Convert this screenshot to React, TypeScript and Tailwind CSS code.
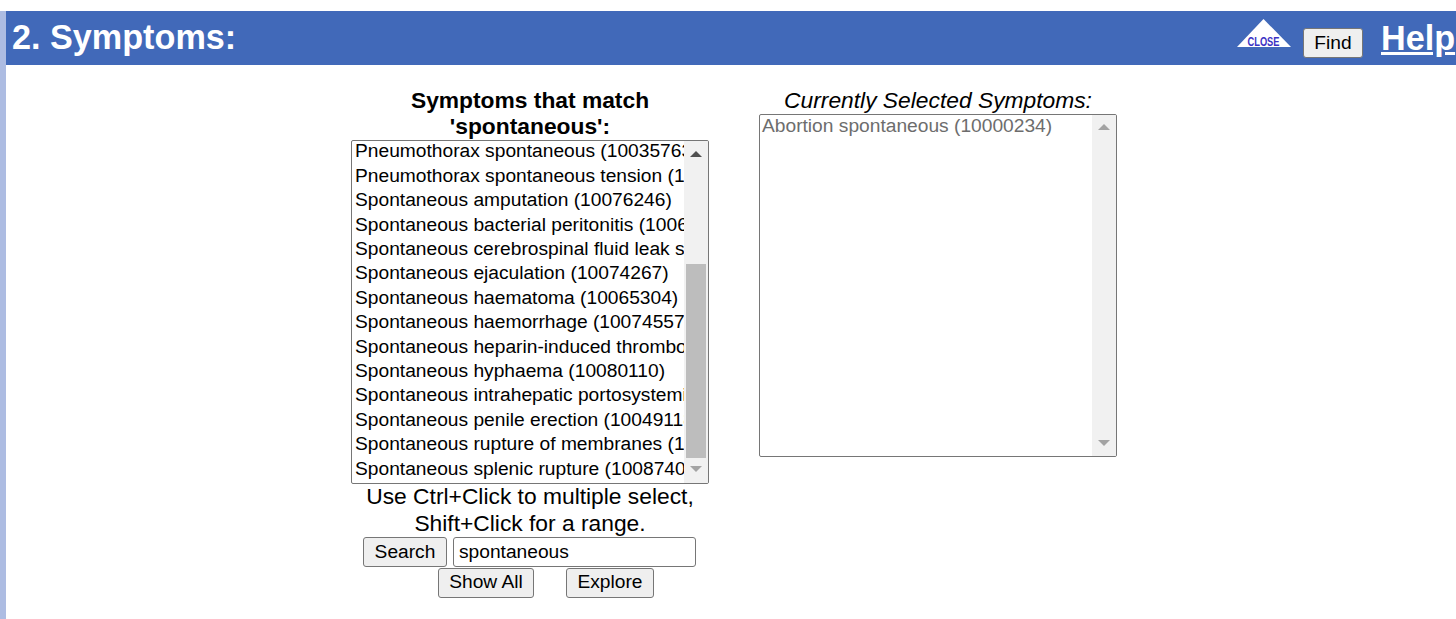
const FONT = "font-['Liberation_Sans',Arial,sans-serif]";

const matches = [
  'Pneumothorax spontaneous (10035763)',
  'Pneumothorax spontaneous tension (10035764)',
  'Spontaneous amputation (10076246)',
  'Spontaneous bacterial peritonitis (10061000)',
  'Spontaneous cerebrospinal fluid leak syndrome',
  'Spontaneous ejaculation (10074267)',
  'Spontaneous haematoma (10065304)',
  'Spontaneous haemorrhage (10074557)',
  'Spontaneous heparin-induced thrombocytopenia',
  'Spontaneous hyphaema (10080110)',
  'Spontaneous intrahepatic portosystemic shunt',
  'Spontaneous penile erection (10049118)',
  'Spontaneous rupture of membranes (10041000)',
  'Spontaneous splenic rupture (10087400)',
];

function Arrow({ up, dark }: { up?: boolean; dark?: boolean }) {
  return (
    <svg width="12" height="6" viewBox="0 0 12 6" className="shrink-0">
      <path d={up ? 'M6 0 L12 6 L0 6 Z' : 'M0 0 L12 0 L6 6 Z'} fill={dark ? '#505050' : '#a3a3a3'} />
    </svg>
  );
}

function CloseIcon() {
  return (
    <svg width="54" height="29" viewBox="0 0 54 29" className="shrink-0">
      <path d="M26.5 0 L54 28 L0 28 Z" fill="#fff" />
      <text x="10.5" y="26.5" fontFamily="'Liberation Sans', Arial, sans-serif" fontSize="12" fontWeight="700" fill="#3b32c4" textLength="32" lengthAdjust="spacingAndGlyphs">CLOSE</text>
    </svg>
  );
}

function PageButton({ label, className }: { label: string; className: string }) {
  return (
    <button className={`h-[30px] rounded-[3px] border border-[#767676] bg-[#efefef] text-[19.2px] leading-none text-black ${className}`}>
      {label}
    </button>
  );
}

export default function App() {
  return (
    <div className={`h-[619px] overflow-hidden bg-white pt-[11px] text-black ${FONT}`}>
      <div className="h-full border-l-[6px] border-[#adbce2]">
        <div className="flex h-[54px] items-center overflow-hidden bg-[#4169b9] pl-[6px] text-white">
          <h1 className="mb-[2px] flex-1 text-[34.2px] leading-none font-bold">2. Symptoms:</h1>
          <div className="mt-[-9px] mr-[12px]"><CloseIcon /></div>
          <PageButton label="Find" className="mt-[10px] mr-[18px] w-[60px] border-[#8a8a8a]" />
          <a className="w-[75px] shrink-0 text-[34.2px] leading-none font-bold whitespace-nowrap underline">Help</a>
        </div>

        <div className="flex gap-[50px] pl-[345px]">
          <div className="flex w-[358px] flex-col items-center">
            <div className="mt-[22px] h-[53px] w-[300px] text-center text-[22.8px] leading-[26px] font-bold">
              Symptoms that match 'spontaneous':
            </div>
            <div className="flex h-[344px] w-full overflow-hidden rounded-[2px] border border-[#767676]">
              <ul className="mt-[-1.7px] min-w-0 flex-1 overflow-hidden pl-[3px] text-[19.2px] leading-[24.4px] whitespace-nowrap">
                {matches.map((m) => (
                  <li key={m} className="overflow-hidden">{m}</li>
                ))}
              </ul>
              <div className="flex w-[24px] shrink-0 flex-col items-center bg-[#f1f1f1] pt-[10px] pb-[11px]">
                <Arrow up dark />
                <div className="mt-[107px] h-[194px] w-[20px] flex-none bg-[#bdbdbd]" />
                <div className="mt-[8px]"><Arrow /></div>
              </div>
            </div>
            <p className="mt-[-1px] w-[350px] text-center text-[22.8px] leading-[27px]">
              Use Ctrl+Click to multiple select, Shift+Click for a range.
            </p>
            <div className="flex w-full gap-[6px] pl-[12px]">
              <PageButton label="Search" className="w-[84px]" />
              <input
                readOnly
                value="spontaneous"
                className="h-[30px] w-[243px] rounded-[3px] border border-[#767676] bg-white px-[5px] text-[19.2px] text-black outline-none"
              />
            </div>
            <div className="mt-[1px] flex w-full gap-[32px] pl-[87px]">
              <PageButton label="Show All" className="w-[96px] pb-[2px]" />
              <PageButton label="Explore" className="w-[88px] pb-[2px]" />
            </div>
          </div>

          <div className="flex w-[358px] flex-col items-center">
            <div className="mt-[22px] h-[27px] text-[22.8px] leading-[26px] italic">Currently Selected Symptoms:</div>
            <div className="flex h-[343px] w-full overflow-hidden rounded-[2px] border border-[#767676]">
              <div className="min-w-0 flex-1 pl-[2px] text-[19.2px] leading-[22px] whitespace-nowrap text-[#6d6d6d]">
                Abortion spontaneous (10000234)
              </div>
              <div className="flex w-[24px] shrink-0 flex-col items-center justify-between bg-[#f1f1f1] pt-[9px] pb-[10px]">
                <Arrow up />
                <Arrow />
              </div>
            </div>
          </div>
        </div>
      </div>
    </div>
  );
}
